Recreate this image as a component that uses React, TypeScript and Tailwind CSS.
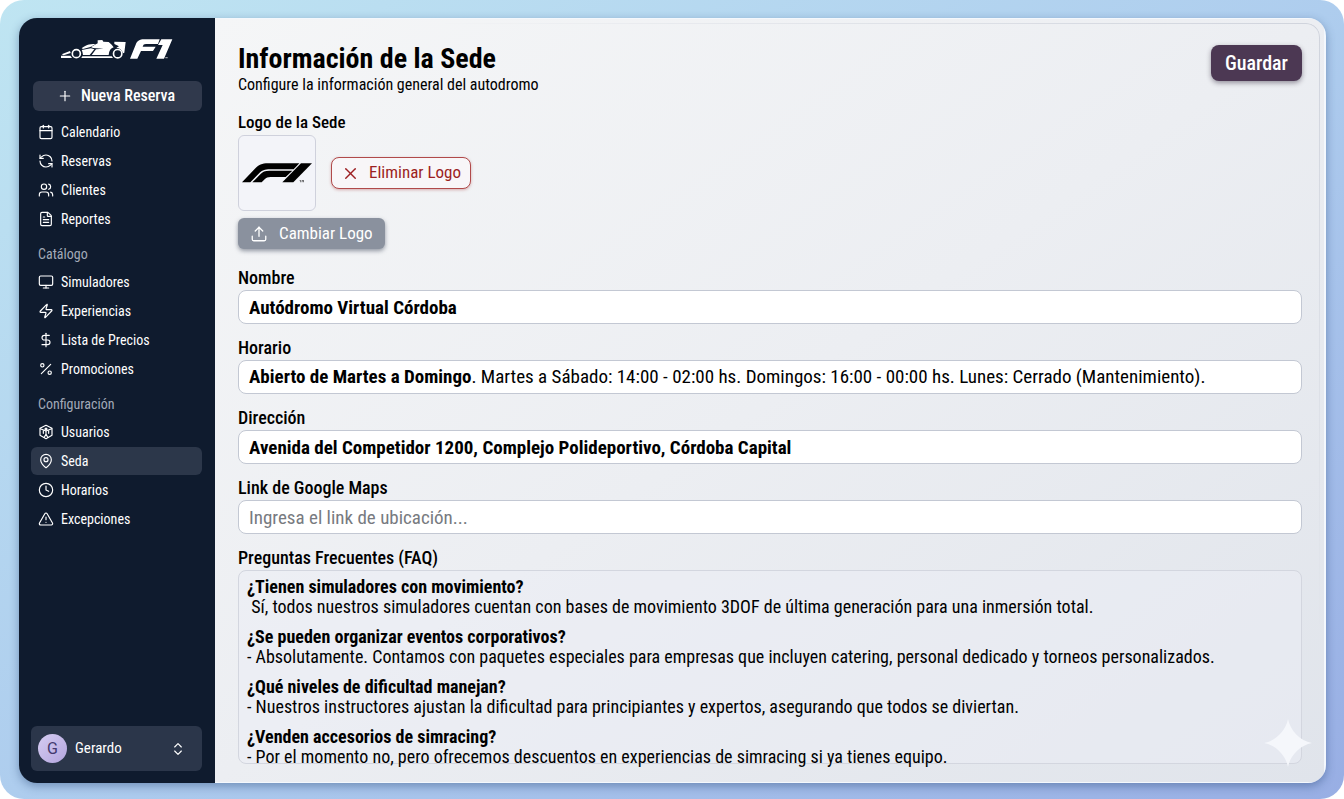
import { useState } from "react"
import type { ComponentType, ReactNode } from "react"
import {
    Calendar, RefreshCcw, Users, FileText, Monitor, Zap, DollarSign, Percent,
    MapPin, Clock, TriangleAlert, Plus, X, Upload, ChevronsUpDown
} from "lucide-react"

interface IconProps{
    size?:number,
    strokeWidth?:number
}

interface NavEntry{
    name:string,
    icon:ComponentType<IconProps>
}

const mainNav:NavEntry[] = [
    {name:"Calendario", icon:Calendar},
    {name:"Reservas", icon:RefreshCcw},
    {name:"Clientes", icon:Users},
    {name:"Reportes", icon:FileText},
];

const catalogNav:NavEntry[] = [
    {name:"Simuladores", icon:Monitor},
    {name:"Experiencias", icon:Zap},
    {name:"Lista de Precios", icon:DollarSign},
    {name:"Promociones", icon:Percent},
];

const configNav:NavEntry[] = [
    {name:"Usuarios", icon:UserCube},
    {name:"Seda", icon:MapPin},
    {name:"Horarios", icon:Clock},
    {name:"Excepciones", icon:TriangleAlert},
];

const faqs = [
    {q:"¿Tienen simuladores con movimiento?", a:" Sí, todos nuestros simuladores cuentan con bases de movimiento 3DOF de última generación para una inmersión total."},
    {q:"¿Se pueden organizar eventos corporativos?", a:"- Absolutamente. Contamos con paquetes especiales para empresas que incluyen catering, personal dedicado y torneos personalizados."},
    {q:"¿Qué niveles de dificultad manejan?", a:"- Nuestros instructores ajustan la dificultad para principiantes y expertos, asegurando que todos se diviertan."},
    {q:"¿Venden accesorios de simracing?", a:"- Por el momento no, pero ofrecemos descuentos en experiencias de simracing si ya tienes equipo."},
];

export default function App(){
    const [active,setActive] = useState("Seda");

    return (
        <div className="min-h-screen bg-white font-['Roboto_Condensed','Liberation_Sans_Narrow',Roboto,sans-serif] text-black">
            <div className="flex min-h-screen rounded-3xl bg-linear-to-br from-[#bfe5f2] via-[#aecdee] to-[#98aee4] pb-4 pl-[19px] pr-[18px] pt-[18px]">
                <div className="flex flex-1 overflow-hidden rounded-[18px] shadow-[0_3px_10px_rgba(40,70,120,0.45)]">
                    <Sidebar active={active} onSelect={setActive}/>
                    <SedeForm/>
                </div>
            </div>
        </div>
    )
}

function Sidebar({active,onSelect}:{active:string,onSelect:(name:string)=>void}){
    return (
        <aside className="flex w-49 shrink-0 flex-col bg-[#0f1b2e] pb-3 pl-3 pr-[13px] pt-5 text-white">
            <div className="flex h-[22px] items-center justify-center gap-1">
                <CarLogo/>
                <F1Mark/>
            </div>

            <button className="ml-0.5 mt-[21px] flex h-[30px] items-center justify-center gap-2 rounded-md bg-[#30394c] pr-[3px] text-base font-medium">
                <Plus size={16} strokeWidth={1.75}/>
                Nueva Reserva
            </button>

            <nav className="mt-[7px]">
                <NavList items={mainNav} active={active} onSelect={onSelect}/>
                <h2 className="mb-px mt-2 px-[7px] text-sm leading-[26px] text-[#a3aab8]">Catálogo</h2>
                <NavList items={catalogNav} active={active} onSelect={onSelect}/>
                <h2 className="mb-px mt-2 px-[7px] text-sm leading-[26px] text-[#a3aab8]">Configuración</h2>
                <NavList items={configNav} active={active} onSelect={onSelect}/>
            </nav>

            <button className="mt-auto flex h-[45px] items-center rounded-md bg-[#2b364a] pl-[7px] pr-4 text-left">
                <span className="flex size-[29px] items-center justify-center rounded-full bg-linear-to-br from-[#d6cdf2] to-[#b3a5de] font-['Roboto',sans-serif] text-base text-[#43396f]">G</span>
                <span className="ml-2 flex-1 text-[15px]">Gerardo</span>
                <ChevronsUpDown size={16} strokeWidth={1.75}/>
            </button>
        </aside>
    )
}

function NavList({items,active,onSelect}:{items:NavEntry[],active:string,onSelect:(name:string)=>void}){
    return (
        <ul className="flex flex-col gap-px">
            {items.map(({name,icon:Icon})=>(
                <li key={name}>
                    <a href="#" onClick={()=>onSelect(name)}
                    className={`flex h-7 items-center gap-[7px] rounded-md px-[7px] text-sm ${name===active?"bg-[#2c374a]":"hover:bg-white/5"}`}>
                        <Icon size={16} strokeWidth={1.75}/>
                        {name}
                    </a>
                </li>
            ))}
        </ul>
    )
}

function SedeForm(){
    const [nombre,setNombre] = useState("Autódromo Virtual Córdoba");
    const [direccion,setDireccion] = useState("Avenida del Competidor 1200, Complejo Polideportivo, Córdoba Capital");
    const [maps,setMaps] = useState("");

    return (
        <main className="relative flex min-w-0 flex-1 flex-col border-y border-r-2 border-[#f4f8fd] bg-linear-to-br from-[#f5f6f7] via-[#eceef2] to-[#e0e4eb] pb-4 pl-[23px] pr-[22px] pt-6">
            <div className="pointer-events-none absolute inset-x-0 bottom-0 top-1 mr-1 rounded-tr-[14px] border-r border-t border-[#cfd3dc] mask-[linear-gradient(to_bottom_left,black,transparent_40%)]"/>

            <header className="flex items-start justify-between">
                <div>
                    <h1 className="text-[28px] font-bold leading-8">Información de la Sede</h1>
                    <p className="text-base leading-5">Configure la información general del autodromo</p>
                </div>
                <button className="mt-0.5 h-9 rounded-lg bg-[#4c3853] px-[14px] text-xl font-medium text-white shadow-[0_2px_5px_rgba(40,30,50,0.45)]">Guardar</button>
            </header>

            <h2 className="mt-[15px] text-[17px] font-medium leading-6">Logo de la Sede</h2>
            <div className="mt-px flex items-center gap-[15px]">
                <div className="flex h-[76px] w-[78px] items-center justify-center rounded-md border border-[#cfd1dc] bg-[#f3f4f9]">
                    <F1Badge/>
                </div>
                <button className="flex h-8 items-center gap-[9px] rounded-lg border border-[#b04a4a] bg-[#f8f6f8] px-[9px] text-[17px] text-[#9c1f22] shadow-[0_1px_3px_rgba(160,40,40,0.35)]">
                    <X size={19} strokeWidth={1.75}/>
                    Eliminar Logo
                </button>
            </div>
            <button className="mt-[7px] flex h-[31px] items-center gap-[11px] self-start rounded-md bg-[#8a919e] px-3 text-[17px] text-white shadow-[0_2px_4px_rgba(50,60,80,0.5)]">
                <Upload size={18} strokeWidth={1.75}/>
                Cambiar Logo
            </button>

            <div className="mt-[17px] flex flex-col gap-3">
                <Field label="Nombre" id="nombre">
                    <input id="nombre" value={nombre} onChange={(e)=>setNombre(e.target.value)}
                    className="h-[34px] w-full rounded-lg border border-[#c3c8d3] bg-white px-[10px] text-[19px] font-bold leading-8"/>
                </Field>
                <Field label="Horario" id="horario">
                    <div id="horario" role="textbox" aria-labelledby="horario-label" contentEditable suppressContentEditableWarning
                    className="h-[34px] w-full overflow-hidden whitespace-nowrap rounded-lg border border-[#c3c8d3] bg-white px-[10px] text-[19px] leading-8">
                        <b className="font-bold">Abierto de Martes a Domingo</b>. Martes a Sábado: 14:00 - 02:00 hs. Domingos: 16:00 - 00:00 hs. Lunes: Cerrado (Mantenimiento).
                    </div>
                </Field>
                <Field label="Dirección" id="direccion">
                    <input id="direccion" value={direccion} onChange={(e)=>setDireccion(e.target.value)}
                    className="h-[34px] w-full rounded-lg border border-[#c3c8d3] bg-white px-[10px] text-[19px] font-bold leading-8"/>
                </Field>
                <Field label="Link de Google Maps" id="maps">
                    <input id="maps" type="url" value={maps} onChange={(e)=>setMaps(e.target.value)} placeholder="Ingresa el link de ubicación..."
                    className="h-[34px] w-full rounded-lg border border-[#c3c8d3] bg-white px-[10px] text-[19px] leading-8 placeholder:text-[#777a80]"/>
                </Field>
                <Field label="Preguntas Frecuentes (FAQ)" id="faq">
                    <div id="faq" role="textbox" aria-multiline="true" aria-labelledby="faq-label" contentEditable suppressContentEditableWarning
                    className="flex h-[194px] flex-col gap-[10px] rounded-lg border border-[#d3d6df] bg-[#eceef6]/50 px-2 pt-1.5 text-lg leading-5">
                        {faqs.map((f)=>(
                            <div key={f.q}>
                                <p className="font-bold">{f.q}</p>
                                <p className="whitespace-pre-wrap">{f.a}</p>
                            </div>
                        ))}
                    </div>
                </Field>
            </div>

            <svg className="pointer-events-none absolute bottom-[15px] right-3 size-12" viewBox="0 0 48 48" fill="#f5f7fb" aria-hidden="true">
                <path d="M24 0C26 11 36 22 48 24C36 26 26 37 24 48C22 37 12 26 0 24C12 22 22 11 24 0Z"/>
            </svg>
        </main>
    )
}

function Field({label,id,children}:{label:string,id:string,children:ReactNode}){
    return (
        <div>
            <label id={`${id}-label`} htmlFor={id} className="block text-lg font-medium leading-6">{label}</label>
            {children}
        </div>
    )
}

function UserCube({size=16,strokeWidth=1.75}:IconProps){
    return (
        <svg width={size} height={size} viewBox="0 0 24 24" fill="none" stroke="currentColor" strokeWidth={strokeWidth} strokeLinecap="round" strokeLinejoin="round" aria-hidden="true">
            <path d="M12 2L21 6.500V17L12 22L3 17V6.500Z"/>
            <path d="M3.500 7L12 10.500L20.500 7"/>
            <circle cx="12" cy="7.500" r="1.500" fill="currentColor"/>
            <path d="M12 10.500V15M12 15L9.500 20M12 15L14.500 20M8 10V14M16 10V14"/>
        </svg>
    )
}

function CarLogo(){
    return (
        <svg width="65" height="22" viewBox="0 0 195 66" fill="white" aria-hidden="true">
            <path d="M2 49L27 39L29 45L8 52Z"/>
            <path d="M0 53H28L33 60H0Z"/>
            <circle cx="46" cy="47" r="12" fill="none" stroke="white" strokeWidth="5"/>
            <path d="M62 31C72 22 82 18 104 18L88 27L66 33Z"/>
            <path d="M62 36L90 31L100 34L86 51H66C65 44 64 40 62 36Z"/>
            <path d="M90 27L110 16V7L124 6L127 11L143 12L152 20L158 28C149 31 144 38 143 51H92L105 34L128 32L96 30Z"/>
            <path d="M160 11L194 12L190 44L186 46C184 36 176 30 166 29L174 25L160 18Z"/>
            <circle cx="170" cy="47" r="12.500" fill="none" stroke="white" strokeWidth="5"/>
            <path d="M64 55H152L156 60H61Z"/>
        </svg>
    )
}

function F1Mark(){
    return (
        <svg width="43" height="22" viewBox="0 0 129 66" fill="white" aria-hidden="true">
            <path d="M0 62L17 20C22 8 29 4 42 4H89L84 18H48C42 18 40 20 38 26H77L69 39H33L22 62Z"/>
            <path d="M94 4H127L102 62H79L98 21H84Z"/>
            <path d="M106 57H113V61H106Z" opacity=".6"/>
        </svg>
    )
}

function F1Badge(){
    return (
        <svg width="70" height="20" viewBox="0 0 210 60" role="img" aria-label="Logo F1">
            <path d="M0 58L38 18C50 6 60 1 78 1H172L155 19H84C68 19 60 22 50 32L25 58Z"/>
            <path d="M31 58L55 34C62 26 69 23 82 23H151L131 42H86C77 42 73 44 68 49L59 58Z"/>
            <path d="M177 1H210L154 58H121Z"/>
            <path d="M173 52H177V58H175V54H173ZM179 52H186V58H184V55H181V58H179Z" opacity=".7"/>
        </svg>
    )
}
